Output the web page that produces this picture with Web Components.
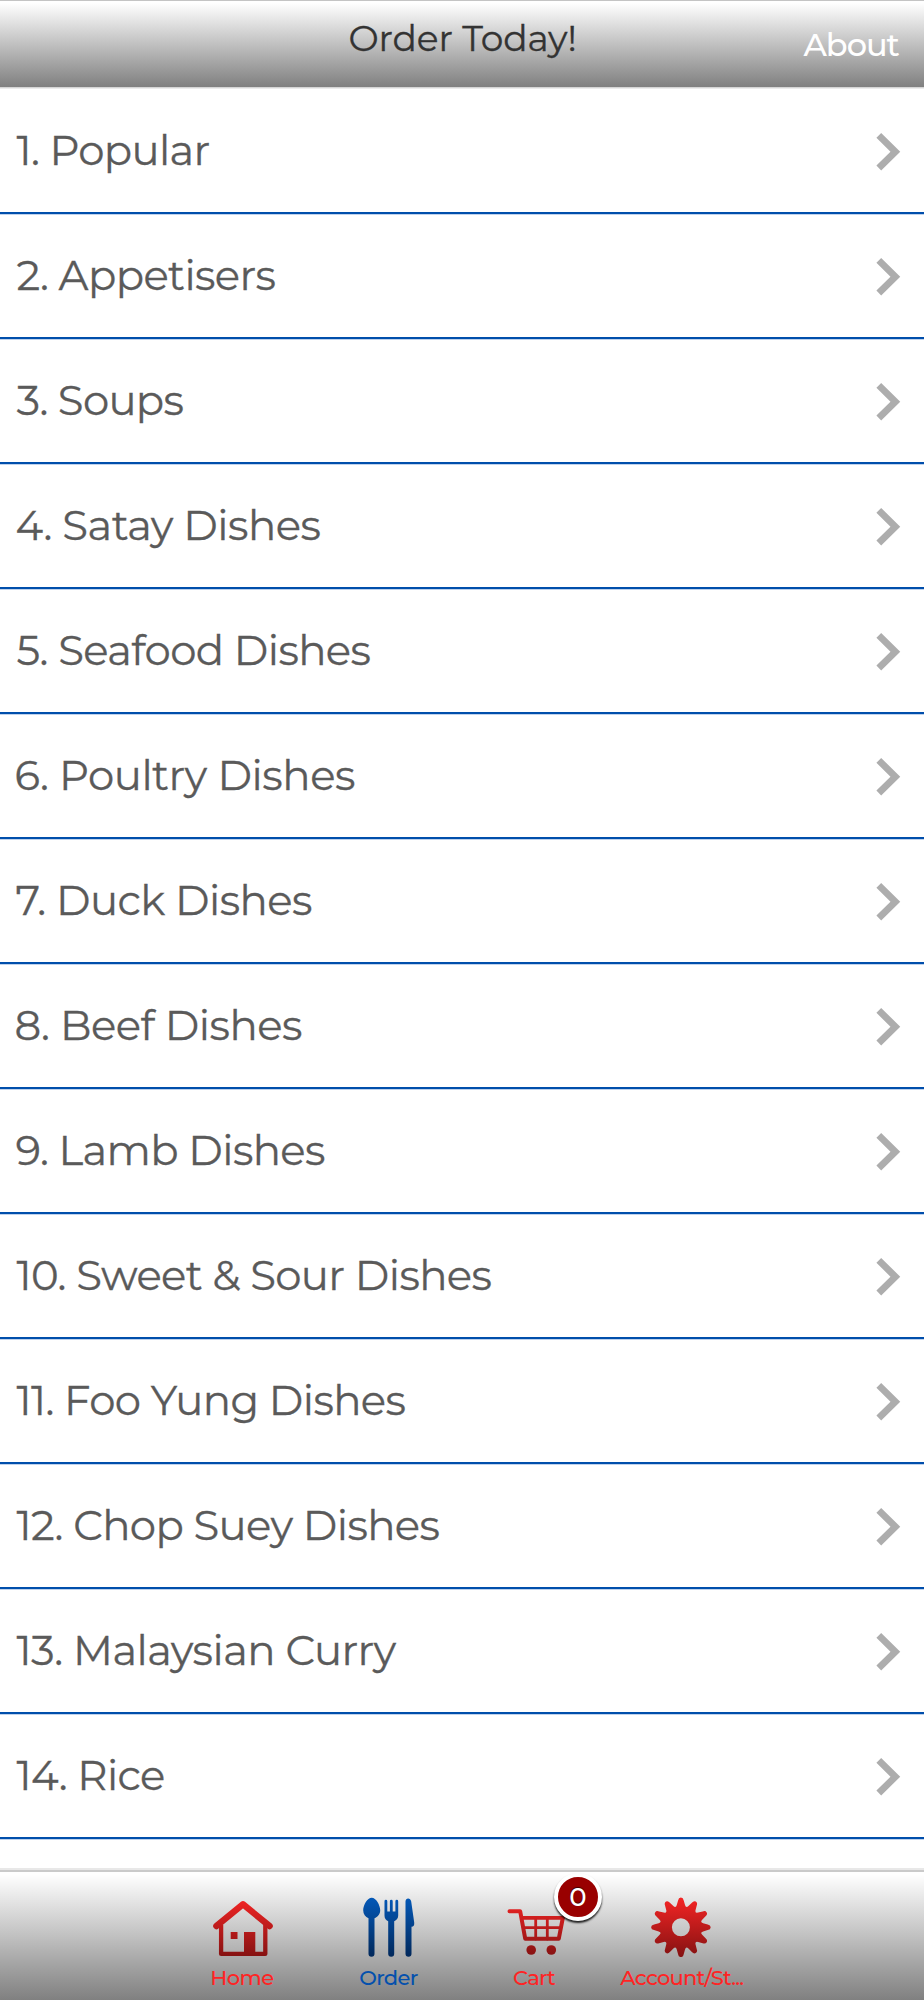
<!DOCTYPE html>
<html lang="en">
<head>
<meta charset="UTF-8">
<title>Order Today!</title>
<style>
    body {
        margin: 0;
        background: #fff;
        font-family: Montserrat, Inter, "Liberation Sans", sans-serif;
    }
</style>
</head>
<body>
<order-app></order-app>

<script>
// Text whose letters are spaced so that it fills a given width
class FitText extends HTMLElement {
    constructor() {
        super();
        this.attachShadow({ mode: 'open' });
    }

    connectedCallback() {
        this.shadowRoot.innerHTML = `
            <style>
                :host { display: block; white-space: nowrap; }
            </style>
            <slot></slot>
        `;
        this.fit();
    }

    fit() {
        const width = Number(this.getAttribute('width'));
        const text = this.textContent;
        const style = getComputedStyle(this);
        const ctx = document.createElement('canvas').getContext('2d');
        ctx.font = `${style.fontWeight} ${style.fontSize} ${style.fontFamily}`;
        const box = ctx.measureText(text);
        const ink = box.actualBoundingBoxLeft + box.actualBoundingBoxRight;
        const spacing = (width - ink) / (text.length - 1);
        this.style.letterSpacing = `${spacing}px`;
        this.style.textIndent = `${box.actualBoundingBoxLeft}px`;
        this.style.width = `${width}px`;
    }
}

customElements.define('fit-text', FitText);

class AppHeader extends HTMLElement {
    constructor() {
        super();
        this.attachShadow({ mode: 'open' });
    }

    connectedCallback() {
        this.shadowRoot.innerHTML = `
            <style>
                :host {
                    display: grid;
                    grid-template-columns: 1fr auto 1fr;
                    box-sizing: border-box;
                    height: 87px;
                    border-top: 1px solid #c4c4c4;
                    background: linear-gradient(#fff 2%, #808080);
                    box-shadow: 0 1px 0 #d5d5d5, 0 2px 0 #ececec;
                }
                .title {
                    grid-column: 2;
                    padding-top: 7px;
                    font-size: 36px;
                    line-height: 60px;
                    color: #333;
                    -webkit-text-stroke: .3px #333;
                }
                .action {
                    justify-self: end;
                    padding: 14px 24.5px 0 0;
                    font-size: 32px;
                    font-weight: 500;
                    line-height: 60px;
                    color: #fff;
                }
            </style>
            <div class="title"><fit-text width="225">Order Today!</fit-text></div>
            <div class="action"><fit-text width="97">About</fit-text></div>
        `;
    }
}

customElements.define('app-header', AppHeader);

class MenuRow extends HTMLElement {
    constructor() {
        super();
        this.attachShadow({ mode: 'open' });
    }

    connectedCallback() {
        this.shadowRoot.innerHTML = `
            <style>
                :host {
                    display: flex;
                    align-items: center;
                    justify-content: space-between;
                    box-sizing: border-box;
                    height: 125px;
                    padding: 0 22px 2px 16.5px;
                    border-bottom: 2px solid #004eab;
                    box-shadow: 0 1px 0 #bfd2ec;
                    font-size: 41.8px;
                    line-height: 50px;
                    color: #5a5a5a;
                    -webkit-text-stroke: .3px #5a5a5a;
                }
                svg { display: block; }
            </style>
            <slot></slot>
            <svg width="26" height="42" viewBox="0 0 26 42">
                <path d="M2.8 6.4 19.4 22.7 2.8 39" fill="none" stroke="#adadad" stroke-width="6.8"/>
            </svg>
        `;
    }
}

customElements.define('menu-row', MenuRow);

// Outline of a cog with twelve rounded teeth, centred in a 60x60 box
function cogPath() {
    const point = (deg, r) => {
        const a = (deg - 90) * Math.PI / 180;
        return `${(29.9 + r * Math.cos(a)).toFixed(2)} ${(30.3 + r * Math.sin(a)).toFixed(2)}`;
    };
    let d = '';
    for (let i = 0; i < 12; i++) {
        const a = i * 30;
        d += `${i ? 'L' : 'M'}${point(a - 6, 27)}Q${point(a - 4.5, 29.8)} ${point(a, 29.8)}`;
        d += `Q${point(a + 4.5, 29.8)} ${point(a + 6, 27)}L${point(a + 10.5, 22.6)}`;
        d += `Q${point(a + 15, 19.6)} ${point(a + 19.5, 22.6)}`;
    }
    return d + 'ZM38.9 30.3a9 9 0 1 0-18 0a9 9 0 1 0 18 0Z';
}

const icons = {
    home: `
        <path d="M8.1 28V56.9H52.3V28" fill="none" stroke="url(#g)" stroke-width="4.3" stroke-linejoin="round"/>
        <path d="M3.4 29 30 7.3 56.6 29" fill="none" stroke="url(#g)" stroke-width="6.4" stroke-linecap="round" stroke-linejoin="round"/>
        <path d="M17.7 35h6.8v7h-6.8zM31 35h11.3v22H31z"/>`,
    order: `
        <path d="M12.7.7C17 .7 21.2 8 21.2 13.3c0 4-2.6 6.7-5.7 8V56.7a3 3 0 0 1-6 0V21.3c-3.1-1.3-5.3-4-5.3-8C4.2 8 8.4.7 12.7.7Z"/>
        <path d="M25.5 4.2a1.4 1.4 0 0 1 2.8 0V14.5h2.6V4.2a1.4 1.4 0 0 1 2.8 0V14.5h2.7V4.2a1.4 1.4 0 0 1 2.8 0V18.5c0 3-1.6 4.6-4 5.7V56.7a3 3 0 0 1-6 0V24.2c-2.4-1.1-3.7-2.7-3.7-5.7Z"/>
        <path d="M46.5 4.5C46.5.5 51.5.3 52.2 4.5L55.2 25.5C55.5 28.5 54.5 29.7 52.5 29.7V56.7a3 3 0 0 1-6 0Z"/>`,
    cart: `
        <g fill="none" stroke="url(#g)" stroke-linecap="round" stroke-linejoin="round">
            <path d="M4.5 14.3H15.2L20.2 41.7H53.8L57.8 21" stroke-width="4"/>
            <path d="M17 20.9H57.8" stroke-width="3.6"/>
            <path d="M18.5 30.7H55.5M30.7 21V42M42.3 21V42" stroke-width="2.8"/>
        </g>
        <circle cx="26.2" cy="53" r="4.8"/>
        <circle cx="46.3" cy="53" r="4.8"/>`,
    account: `<path fill-rule="evenodd" d="${cogPath()}"/>`
};

class TabItem extends HTMLElement {
    constructor() {
        super();
        this.attachShadow({ mode: 'open' });
    }

    connectedCallback() {
        const icon = this.getAttribute('icon');
        const badge = this.getAttribute('badge');
        const active = this.hasAttribute('active');
        const [top, bottom] = active ? ['#0457b5', '#02295c'] : ['#f22424', '#861212'];

        this.shadowRoot.innerHTML = `
            <style>
                :host {
                    position: relative;
                    display: flex;
                    flex-direction: column;
                    align-items: center;
                    width: 146.2px;
                    padding-top: 25px;
                    font-size: 21px;
                    font-weight: 500;
                    line-height: 30px;
                    color: ${active ? '#0450ad' : '#ff2424'};
                }
                svg { display: block; margin-bottom: 6px; }
                .badge {
                    position: absolute;
                    left: 92px;
                    top: 1px;
                    width: 40px;
                    height: 40px;
                    border: 4.7px solid #fff;
                    border-radius: 50%;
                    background: #900;
                    box-shadow: 0 2px 2px rgba(0, 0, 0, .85);
                    font-size: 26px;
                    line-height: 41px;
                    text-align: center;
                    text-shadow: 0 -1px 1px rgba(0, 0, 0, .6);
                    color: #fff;
                }
            </style>
            <svg width="60" height="60" viewBox="0 0 60 60" fill="url(#g)">
                <linearGradient id="g" gradientUnits="userSpaceOnUse" x1="0" y1="2" x2="0" y2="59">
                    <stop offset="0" stop-color="${top}"/>
                    <stop offset="1" stop-color="${bottom}"/>
                </linearGradient>
                ${icons[icon]}
            </svg>
            <slot></slot>
            ${badge === null ? '' : `<div class="badge">${badge}</div>`}
        `;
    }
}

customElements.define('tab-item', TabItem);

class TabBar extends HTMLElement {
    constructor() {
        super();
        this.attachShadow({ mode: 'open' });
    }

    connectedCallback() {
        this.shadowRoot.innerHTML = `
            <style>
                :host {
                    display: flex;
                    justify-content: center;
                    height: 128px;
                    background: linear-gradient(#fff 2%, #808080);
                    border-top: 2px solid #cacaca;
                    box-shadow: 0 -2px 0 #e8e8e8;
                }
            </style>
            <slot></slot>
        `;
    }
}

customElements.define('tab-bar', TabBar);

const menu = [
    ['1. Popular', 193],
    ['2. Appetisers', 259],
    ['3. Soups', 167],
    ['4. Satay Dishes', 304],
    ['5. Seafood Dishes', 354],
    ['6. Poultry Dishes', 338.5],
    ['7. Duck Dishes', 295.5],
    ['8. Beef Dishes', 285.5],
    ['9. Lamb Dishes', 308.5],
    ['10. Sweet & Sour Dishes', 475],
    ['11. Foo Yung Dishes', 389],
    ['12. Chop Suey Dishes', 423],
    ['13. Malaysian Curry', 380],
    ['14. Rice', 147.5]
];

class OrderApp extends HTMLElement {
    constructor() {
        super();
        this.attachShadow({ mode: 'open' });
    }

    connectedCallback() {
        const rows = menu.map(([label, width]) => `
            <menu-row><fit-text width="${width}">${label.replace('&', '&amp;')}</fit-text></menu-row>
        `).join('');

        this.shadowRoot.innerHTML = `
            <style>
                :host {
                    display: flex;
                    flex-direction: column;
                    width: 924px;
                    height: 2000px;
                    overflow: hidden;
                }
                main { flex: 1; padding-top: 2px; }
            </style>
            <app-header></app-header>
            <main>${rows}</main>
            <tab-bar>
                <tab-item icon="home"><fit-text width="61">Home</fit-text></tab-item>
                <tab-item icon="order" active><fit-text width="57.5">Order</fit-text></tab-item>
                <tab-item icon="cart" badge="0"><fit-text width="42">Cart</fit-text></tab-item>
                <tab-item icon="account"><fit-text width="124">Account/St...</fit-text></tab-item>
            </tab-bar>
        `;
    }
}

customElements.define('order-app', OrderApp);
</script>
</body>
</html>
